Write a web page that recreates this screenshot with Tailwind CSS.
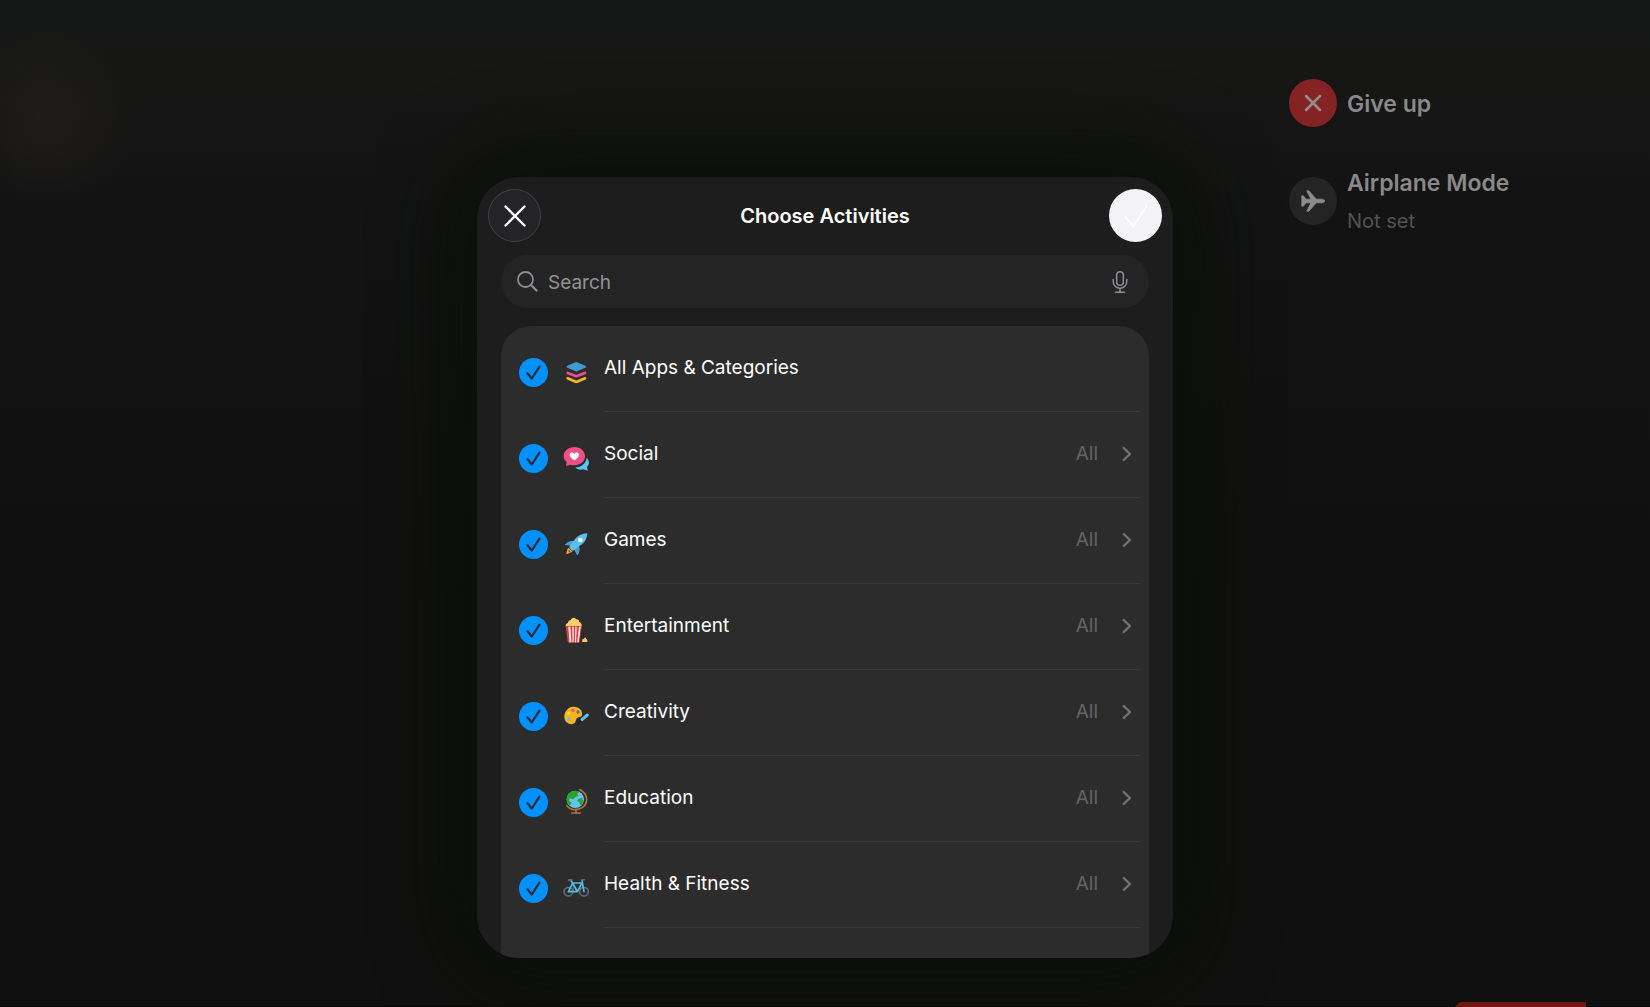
<!DOCTYPE html>
<html lang="en">
  <head>
    <meta charset="UTF-8" />
    <meta name="viewport" content="width=device-width, initial-scale=1.0" />
    <title>Choose Activities</title>
    <script src="https://cdn.jsdelivr.net/npm/@tailwindcss/browser@4"></script>
  </head>
  <body class="min-h-screen flex flex-col bg-[#101010] bg-[radial-gradient(circle_at_46px_116px,#1f1d1a_0,#1b1a1800_90px),linear-gradient(#161818,#161715_60px,#131314_200px,#101010_600px)] font-['Inter',sans-serif] text-white">
    <div class="flex-1 grid grid-cols-[1fr_minmax(0,696px)_1fr]">
      <!-- Dialog -->
      <main class="col-start-2 pt-[177px] pb-[44px] flex">
        <section role="dialog" aria-labelledby="title" class="flex-1 flex flex-col rounded-[42px] overflow-hidden bg-[#1d1d1d] shadow-[0_0_80px_20px_#0b0f06]">
          <header class="flex items-center justify-between px-[11px] pt-3">
            <button aria-label="Close" class="size-[53px] rounded-full bg-[#242426] border border-[#434345] grid place-items-center">
              <svg class="size-6" viewBox="0 0 24 24" fill="none" stroke="#fff" stroke-width="2.4" stroke-linecap="round"><path d="M2.500 2.500l19 19M21.500 2.500l-19 19" /></svg>
            </button>
            <h1 id="title" class="text-[20px] leading-6 font-semibold">Choose Activities</h1>
            <button aria-label="Done" class="size-[53px] rounded-full bg-[#f3f3f6] grid place-items-center">
              <svg class="size-6" viewBox="0 0 24 24" fill="none" stroke="#fff" stroke-width="2.2" stroke-linecap="round" stroke-linejoin="round"><path d="M1.500 13L9 22.500L22.500 2.500" /></svg>
            </button>
          </header>

          <div class="mx-6 mt-[13px] h-[53px] rounded-full bg-[#242424] px-4 flex items-center gap-[10px]">
            <svg class="size-[21px] shrink-0" viewBox="0 0 21 21" fill="none" stroke="#8e8e92" stroke-width="1.8" stroke-linecap="round"><circle cx="8.500" cy="8.500" r="7.500" /><path d="M14 14l5.500 5.500" stroke-width="2.3" /></svg>
            <input type="text" aria-label="Search" placeholder="Search" class="flex-1 min-w-0 pt-[2px] bg-transparent text-[19px] leading-6 outline-none placeholder:text-[#929297]" />
            <button aria-label="Dictate" class="w-[26px] grid place-items-center">
              <svg class="w-4 h-[22px]" viewBox="0 0 16 22" fill="none" stroke="#8e8e92" stroke-width="1.5" stroke-linecap="round"><rect x="4.700" y=".8" width="6.600" height="13.400" rx="3.300" /><path d="M1.200 8.500v2a6.800 6.800 0 0 0 13.600 0v-2M8 17.300V21M3.500 21.200h9" /></svg>
            </button>
          </div>

          <ul id="activities" class="flex-1 mx-6 mt-[18px] rounded-t-[30px] bg-[#2c2c2c] pb-[30px]"></ul>
        </section>
      </main>

      <!-- Session controls -->
      <aside class="pl-[116px] pt-[79px] flex flex-col gap-[38px] text-[#898989]">
        <button class="flex items-center gap-[10px] text-left">
          <span class="size-12 shrink-0 rounded-full bg-[#842224] grid place-items-center">
            <svg class="size-[18px]" viewBox="0 0 18 18" fill="none" stroke="#909090" stroke-width="2.5" stroke-linecap="round"><path d="M2 2l14 14M16 2L2 16" /></svg>
          </span>
          <span class="text-[23px] leading-8 font-semibold pt-[2px]">Give up</span>
        </button>
        <button class="flex items-center gap-[10px] text-left">
          <span class="size-12 shrink-0 rounded-full bg-[#242424] grid place-items-center">
            <svg class="size-6" viewBox="0 0 24 24" fill="#8c8c8c" stroke="#8c8c8c" stroke-width=".8" stroke-linejoin="round"><path d="M.8 6.800h1.500L5.200 10.200H10L5.700 1.800h2.200L15.300 10.200H20.500c1.800 0 3.200.7 3.200 1.800s-1.400 1.800-3.200 1.800H15.300L7.900 22.200H5.700L10 13.800H5.200L2.300 17.200H.8V6.800z" /></svg>
          </span>
          <span class="grid gap-1 whitespace-nowrap">
            <span class="text-[23px] leading-9 font-semibold">Airplane Mode</span>
            <span class="text-[20px] leading-8 text-[#525252]">Not set</span>
          </span>
        </button>
      </aside>
    </div>

    <footer class="h-[5px] border-b border-[#080808] flex justify-end pr-16">
      <div class="w-[131px] h-[5px] bg-[#6f170f] [clip-path:polygon(5px_0,100%_0,100%_100%,0_100%)]"></div>
    </footer>

    <script>
      const icons = {
        layers: `
          <path d="M42 10L67 20q5 3 0 6L42 37q-2 1-4 0L13 26q-5-3 0-6L38 10q2-1 4 0z" fill="#4499d5"/>
          <path d="M14 42l24 9q2 1 4 0l24-9" stroke="#f0508a" stroke-width="8" stroke-linecap="round" fill="none"/>
          <path d="M14 58l24 10q2 1 4 0l24-10" stroke="#fdb81c" stroke-width="8" stroke-linecap="round" fill="none"/>`,
        social: `
          <path d="M71 38c9 9 9 20 1 27l2 12-13-4c-11 3-20 0-24-6 17 0 32-11 34-29z" fill="#5cc4f4"/>
          <path d="M34 6C52 6 66 18 66 34S52 61 34 61c-4 0-8-1-11-2L9 63l2-12C5 47 2 41 2 34 2 18 16 6 34 6z" fill="#ef4f84"/>
          <path d="M34 46C25 40 20 35 20 29c0-7 10-9 14-2 4-7 14-5 14 2 0 6-5 11-14 17z" fill="#fff"/>`,
        rocket: `
          <path d="M73 7C52 9 42 16 32 30 20 30 12 34 6 42l15 1-2 7 9 9 7-2 2 4 6 12c7-8 7-17 5-27C64 37 71 27 73 7z" fill="#5bbdf0"/>
          <path d="M6 42c6-8 14-12 26-12L21 43zM43 72c7-9 7-16 5-26L35 57z" fill="#419fd4"/>
          <circle cx="52" cy="27" r="7" fill="#fff"/>
          <path d="M17 51l11 10c-3 5-7 4-9 4-3 3-6 4-9 4 0-3 1-6 2-8 0-4 1-8 5-10z" fill="#f7a81b"/>
          <path d="M17 56l6 5-6 3z" fill="#55412b"/>`,
        popcorn: `
          <path d="M8 29c-1-7 3-10 7-11 0-6 4-8 8-8 2-8 12-11 16-3 6-1 10 3 9 8 7 2 9 8 8 14z" fill="#fdcf6c"/>
          <path d="M18 21c4 4 8 2 9-2m8 3c5 1 8-2 7-6" stroke="#f4b84f" stroke-width="2" fill="none"/>
          <path d="M8 27h48l-6 47q-1 3-4 3H18q-3 0-4-3z" fill="#e63b38"/>
          <path d="M16 29h6l3 47h-5zM28 29h4v47h-3zM37 29h4l-2 47h-3zM48 29h5l-6 47h-4z" fill="#fff"/>
          <path d="M57 75l1-8 5-2c2-6 7-4 6 1 4 0 5 5 4 9z" fill="#f5c661"/>`,
        palette: `
          <path d="M31 11C47 10 59 21 57 36c-1 7-8 5-13 8-7 4-4 12-10 17C24 68 3 59 4 41 4 27 14 12 31 11z" fill="#f9b321"/>
          <circle cx="30" cy="22" r="5" fill="#f04e83"/><circle cx="45" cy="27" r="5" fill="#6767a5"/>
          <circle cx="17" cy="31" r="5" fill="#fce51d"/><circle cx="17" cy="48" r="5" fill="#58c3ea"/>
          <path d="M73 36L57 50" stroke="#5bbff0" stroke-width="9" stroke-linecap="round"/>
          <path d="M55 53c-2 7-6 10-14 12 6-3 4-9 9-14z" fill="#191b1d"/>`,
        globe: `
          <path d="M50 2c12 5 20 14 21 28C72 58 32 74 12 50" stroke="#b2723a" stroke-width="5" stroke-linecap="round" fill="none"/>
          <path d="M39 61v10M26 72h26" stroke="#b2723a" stroke-width="5" stroke-linecap="round"/>
          <circle cx="37" cy="31" r="26" fill="#66c4f5"/>
          <path d="M31 6c10-1 14 0 18 3l-6 5 4 7-9 2-7 8-11-3-2 8 8 5-6 9C13 47 8 33 13 21 17 13 23 8 31 6zM43 32l12-6c7 3 6 18-1 23-6-4-2-9-7-11-4 0-5-3-4-6z" fill="#29a526"/>`,
        bike: `
          <circle cx="16" cy="50" r="13" stroke="#66696c" stroke-width="5" fill="none"/>
          <circle cx="63" cy="50" r="13" stroke="#66696c" stroke-width="5" fill="none"/>
          <path d="M16 50l13-26 14 26h-27M29 24h28L43 50M23 16l6 8M57 16l6 34" stroke="#4fbff0" stroke-width="5" stroke-linecap="round" stroke-linejoin="round" fill="none"/>
          <path d="M16 15h11M57 16l7-2" stroke="#737577" stroke-width="4" stroke-linecap="round"/>
          <path d="M29 24l3 26" stroke="#8b9296" stroke-width="2"/>`
      };

      const activities = [
        { name: "All Apps &amp; Categories", icon: "layers", all: true },
        { name: "Social", icon: "social" },
        { name: "Games", icon: "rocket" },
        { name: "Entertainment", icon: "popcorn" },
        { name: "Creativity", icon: "palette" },
        { name: "Education", icon: "globe" },
        { name: "Health &amp; Fitness", icon: "bike" }
      ];

      function renderActivities() {
        document.getElementById("activities").innerHTML = activities.map(a => `
          <li class="h-[86px] pl-[18px] pr-[9px] flex">
            <div class="w-[85px] pt-[6px] flex items-center gap-[15px]">
              <span class="grid size-[29px]">
                <input type="checkbox" id="${a.icon}" checked class="peer [grid-area:1/1] appearance-none size-[29px] rounded-full border border-[#5a5a5a] checked:bg-[#0091ff] checked:border-0" />
                <svg class="[grid-area:1/1] size-[29px] pointer-events-none invisible peer-checked:visible" viewBox="0 0 29 29" fill="none" stroke="#202a33" stroke-width="2.2" stroke-linecap="round" stroke-linejoin="round"><path d="M8.500 15.300l4.300 5.200 7.700-11.800" /></svg>
              </span>
              <svg class="size-[26px]" viewBox="0 0 78 78">${icons[a.icon]}</svg>
            </div>
            <div class="flex-1 pb-[1px] border-b border-[#3a3a3a] flex items-center justify-between text-[19px] leading-6">
              <label for="${a.icon}" class="pb-[1px]">${a.name}</label>
              ${a.all ? "" : `
              <button class="pr-2 flex items-center gap-6 text-[#646465]" aria-label="All, open">
                <span class="pb-[1px]">All</span>
                <svg class="w-[10px] h-4" viewBox="0 0 10 16" fill="none" stroke="#737375" stroke-width="2.400" stroke-linecap="round" stroke-linejoin="round"><path d="M1.700 2l6.300 6-6.300 6" /></svg>
              </button>`}
            </div>
          </li>`).join("");
      }

      renderActivities();
    </script>
  </body>
</html>
